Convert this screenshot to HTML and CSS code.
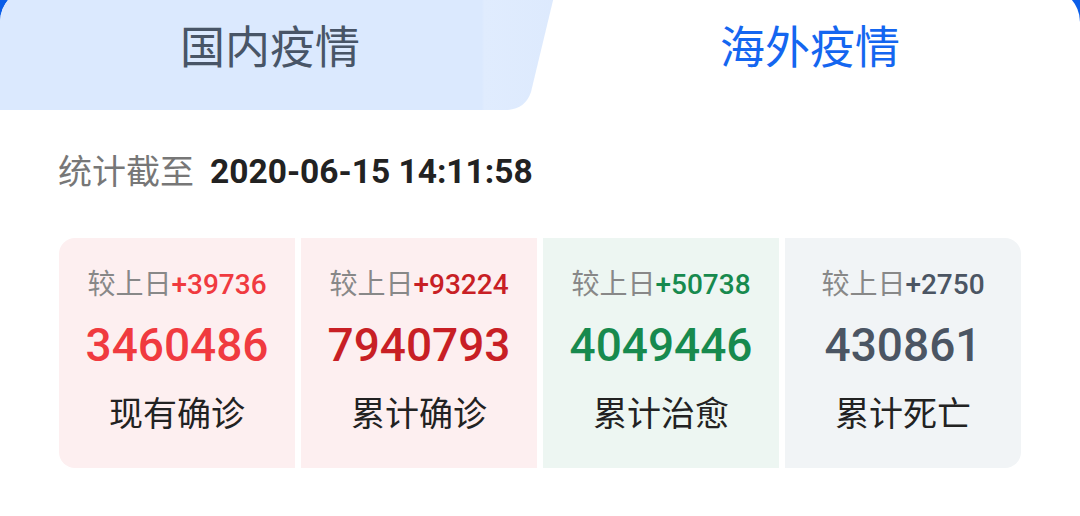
FILE: index.html
```html
<!DOCTYPE html>
<html lang="zh">
<head>
<meta charset="utf-8">
<link rel="stylesheet" href="styles.css">
</head>
<body>
<div class="sheet">
  <div class="tabs">
    <div class="tab tab-left"><span class="tab-text">国内疫情</span></div>
    <div class="tab tab-right"><span class="tab-text">海外疫情</span></div>
  </div>
  <div class="stamp">
    <span class="stamp-label">统计截至</span>
    <span class="stamp-time">2020-06-15 14:11:58</span>
  </div>
  <div class="stats">
    <div class="stat stat-red">
      <div class="delta">较上日<b>+39736</b></div>
      <div class="num">3460486</div>
      <div class="label">现有确诊</div>
    </div>
    <div class="stat stat-dark">
      <div class="delta">较上日<b>+93224</b></div>
      <div class="num">7940793</div>
      <div class="label">累计确诊</div>
    </div>
    <div class="stat stat-green">
      <div class="delta">较上日<b>+50738</b></div>
      <div class="num">4049446</div>
      <div class="label">累计治愈</div>
    </div>
    <div class="stat stat-gray">
      <div class="delta">较上日<b>+2750</b></div>
      <div class="num">430861</div>
      <div class="label">累计死亡</div>
    </div>
  </div>
</div>
</body>
</html>
```
FILE: styles.css
```css
html, body {
  margin: 0;
  padding: 0;
  background: #0b5ee8;
  height: 100%;
  overflow: hidden;
}
body {
  font-family: Roboto, "Noto Sans CJK SC", sans-serif;
}
.sheet {
  margin-top: -12px;
  background: #ffffff;
  border-radius: 34px 34px 0 0;
  height: 540px;
  overflow: hidden;
}
.tabs {
  display: grid;
  grid-template-columns: 1fr 1fr;
  height: 122px;
}
.tab {
  display: flex;
  align-items: center;
  justify-content: center;
  position: relative;
  padding-top: 0;
  box-sizing: border-box;
}
.tab-text {
  font-size: 45px;
  line-height: 60px;
  position: relative;
  z-index: 1;
}
.tab-left {
  color: #485567;
}
.tab-left::before {
  content: "";
  position: absolute;
  left: 0;
  top: 0;
  bottom: 0;
  width: 570px;
  background: linear-gradient(90deg, #dbe9fe 0%, #dbe9fe 84.5%, #e0ecfe 85%, #dce9fd 100%);
  clip-path: path('M0 0 H556 L531 104 Q525 122 505 122 H0 Z');
}
.tab-right {
  color: #1466f0;
}
.stamp {
  padding: 40px 0 0 58px;
  height: 44px;
  line-height: 44px;
  display: flex;
  align-items: center;
  gap: 16px;
}
.stamp-label {
  font-size: 34px;
  color: #777777;
}
.stamp-time {
  font-size: 33.5px;
  font-weight: 700;
  color: #222222;
}
.stats {
  margin: 44px 59px 0;
  display: grid;
  grid-template-columns: repeat(4, 1fr);
  gap: 6px;
  border-radius: 16px;
  overflow: hidden;
}
.stat {
  padding: 27px 0 32px;
  text-align: center;
}
.delta {
  font-size: 28px;
  line-height: 40px;
  color: #888888;
}
.delta b {
  font-weight: 500;
}
.num {
  margin-top: 10px;
  font-size: 46px;
  line-height: 60px;
  font-weight: 500;
}
.label {
  margin-top: 17px;
  font-size: 34px;
  line-height: 44px;
  color: #222222;
}
.stat-red { background: #fdeff0; }
.stat-red b, .stat-red .num { color: #f03a3f; }
.stat-dark { background: #fdeff0; }
.stat-dark b, .stat-dark .num { color: #c81f25; }
.stat-green { background: #edf6f2; }
.stat-green b, .stat-green .num { color: #178a4e; }
.stat-gray { background: #f1f4f6; }
.stat-gray b, .stat-gray .num { color: #4b5563; }
```
